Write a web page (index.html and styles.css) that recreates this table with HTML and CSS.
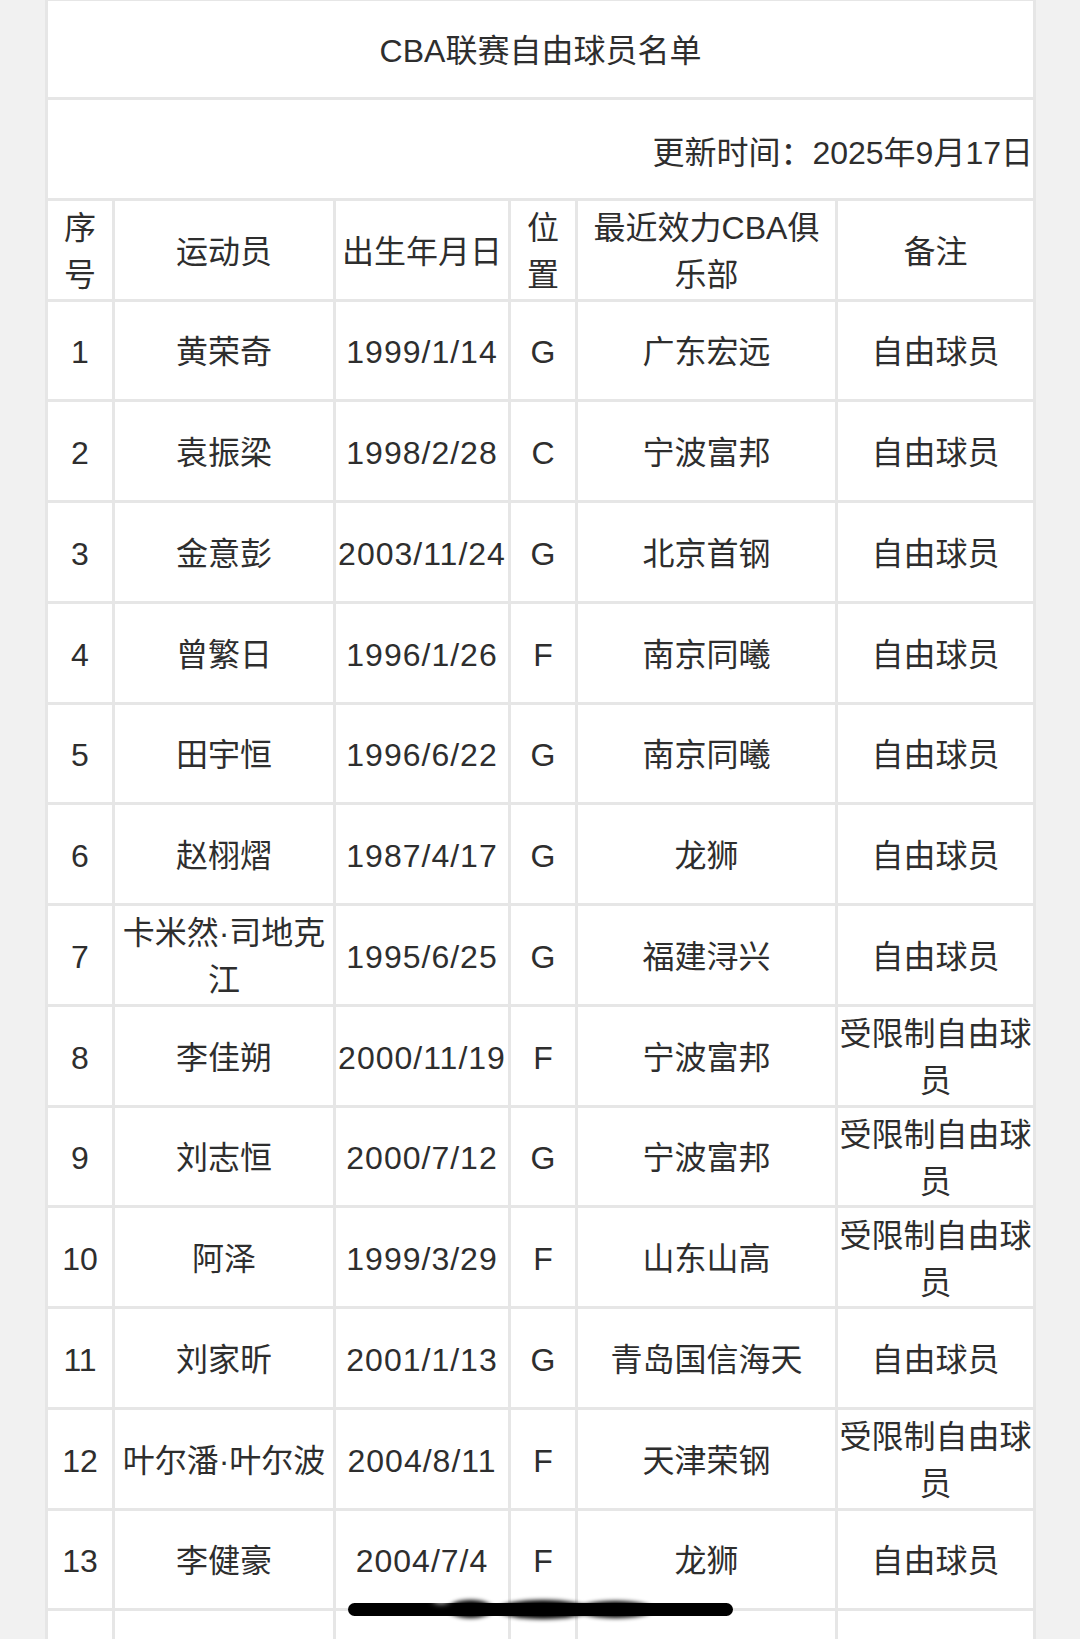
FILE: index.html
```html
<!DOCTYPE html>
<html lang="zh-CN">
<head>
<meta charset="utf-8">
<title>CBA联赛自由球员名单</title>
<link rel="stylesheet" href="styles.css">
</head>
<body>
<div class="sheet">
  <div class="cell title">CBA联赛自由球员名单</div>
  <div class="cell update">更新时间：2025年9月17日</div>

  <div class="cell">序<br>号</div>
  <div class="cell">运动员</div>
  <div class="cell">出生年月日</div>
  <div class="cell">位<br>置</div>
  <div class="cell">最近效力CBA俱乐部</div>
  <div class="cell">备注</div>

  <div class="cell">1</div><div class="cell">黄荣奇</div><div class="cell num">1999/1/14</div><div class="cell">G</div><div class="cell">广东宏远</div><div class="cell">自由球员</div>
  <div class="cell">2</div><div class="cell">袁振梁</div><div class="cell num">1998/2/28</div><div class="cell">C</div><div class="cell">宁波富邦</div><div class="cell">自由球员</div>
  <div class="cell">3</div><div class="cell">金意彭</div><div class="cell num">2003/11/24</div><div class="cell">G</div><div class="cell">北京首钢</div><div class="cell">自由球员</div>
  <div class="cell">4</div><div class="cell">曾繁日</div><div class="cell num">1996/1/26</div><div class="cell">F</div><div class="cell">南京同曦</div><div class="cell">自由球员</div>
  <div class="cell">5</div><div class="cell">田宇恒</div><div class="cell num">1996/6/22</div><div class="cell">G</div><div class="cell">南京同曦</div><div class="cell">自由球员</div>
  <div class="cell">6</div><div class="cell">赵栩熠</div><div class="cell num">1987/4/17</div><div class="cell">G</div><div class="cell">龙狮</div><div class="cell">自由球员</div>
  <div class="cell">7</div><div class="cell">卡米然·司地克江</div><div class="cell num">1995/6/25</div><div class="cell">G</div><div class="cell">福建浔兴</div><div class="cell">自由球员</div>
  <div class="cell">8</div><div class="cell">李佳朔</div><div class="cell num">2000/11/19</div><div class="cell">F</div><div class="cell">宁波富邦</div><div class="cell">受限制自由球员</div>
  <div class="cell">9</div><div class="cell">刘志恒</div><div class="cell num">2000/7/12</div><div class="cell">G</div><div class="cell">宁波富邦</div><div class="cell">受限制自由球员</div>
  <div class="cell">10</div><div class="cell">阿泽</div><div class="cell num">1999/3/29</div><div class="cell">F</div><div class="cell">山东山高</div><div class="cell">受限制自由球员</div>
  <div class="cell">11</div><div class="cell">刘家昕</div><div class="cell num">2001/1/13</div><div class="cell">G</div><div class="cell">青岛国信海天</div><div class="cell">自由球员</div>
  <div class="cell">12</div><div class="cell">叶尔潘·叶尔波</div><div class="cell num">2004/8/11</div><div class="cell">F</div><div class="cell">天津荣钢</div><div class="cell">受限制自由球员</div>
  <div class="cell">13</div><div class="cell">李健豪</div><div class="cell num">2004/7/4</div><div class="cell">F</div><div class="cell">龙狮</div><div class="cell">自由球员</div>
  <div class="cell"></div><div class="cell"></div><div class="cell"></div><div class="cell"></div><div class="cell"></div><div class="cell"></div>
</div>

<div class="home-indicator">
  <span class="smudge s1"></span>
  <span class="smudge s2"></span>
  <span class="smudge s3"></span>
  <span class="smudge s4"></span>
</div>
</body>
</html>
```

FILE: styles.css
```css
html, body {
  margin: 0;
  padding: 0;
  background: #f1f1f1;
  height: 1639px;
  overflow: hidden;
}

body {
  font-family: "Liberation Sans", "Noto Sans CJK SC", sans-serif;
  font-size: 32px;
  color: #2e2e2e;
  position: relative;
}

.sheet {
  margin: -2px 0 0 45px;
  width: 991px;
  box-sizing: border-box;
  padding: 3px;
  background: #e6e6e6;
  display: grid;
  grid-template-columns: 64px 218px 172px 64px 257px 195px;
  grid-template-rows: 95.5px 98.5px 97.5px repeat(14, 97.75px);
  gap: 3px;
}

.cell {
  background: #ffffff;
  display: flex;
  align-items: center;
  justify-content: center;
  text-align: center;
  line-height: 47px;
  padding: 5px 0 0 0;
  box-sizing: border-box;
  overflow: hidden;
}

.title {
  grid-column: 1 / -1;
}

.update {
  grid-column: 1 / -1;
  justify-content: flex-end;
  padding-top: 10px;
}

.num {
  letter-spacing: 1px;
}

.home-indicator {
  position: absolute;
  left: 348px;
  top: 1603px;
  width: 385px;
  height: 13px;
  border-radius: 7px;
  background: #000000;
}

.smudge {
  position: absolute;
  background: #000000;
  border-radius: 50%;
  filter: blur(2px);
}

.s1 { left: 100px; top: -3px; width: 45px; height: 18px; }
.s2 { left: 150px; top: -3px; width: 90px; height: 19px; }
.s3 { left: 230px; top: -2px; width: 75px; height: 17px; }
.s4 { left: 85px; top: -6px; width: 16px; height: 6px; background: #ffffff; filter: blur(3px); }
```
